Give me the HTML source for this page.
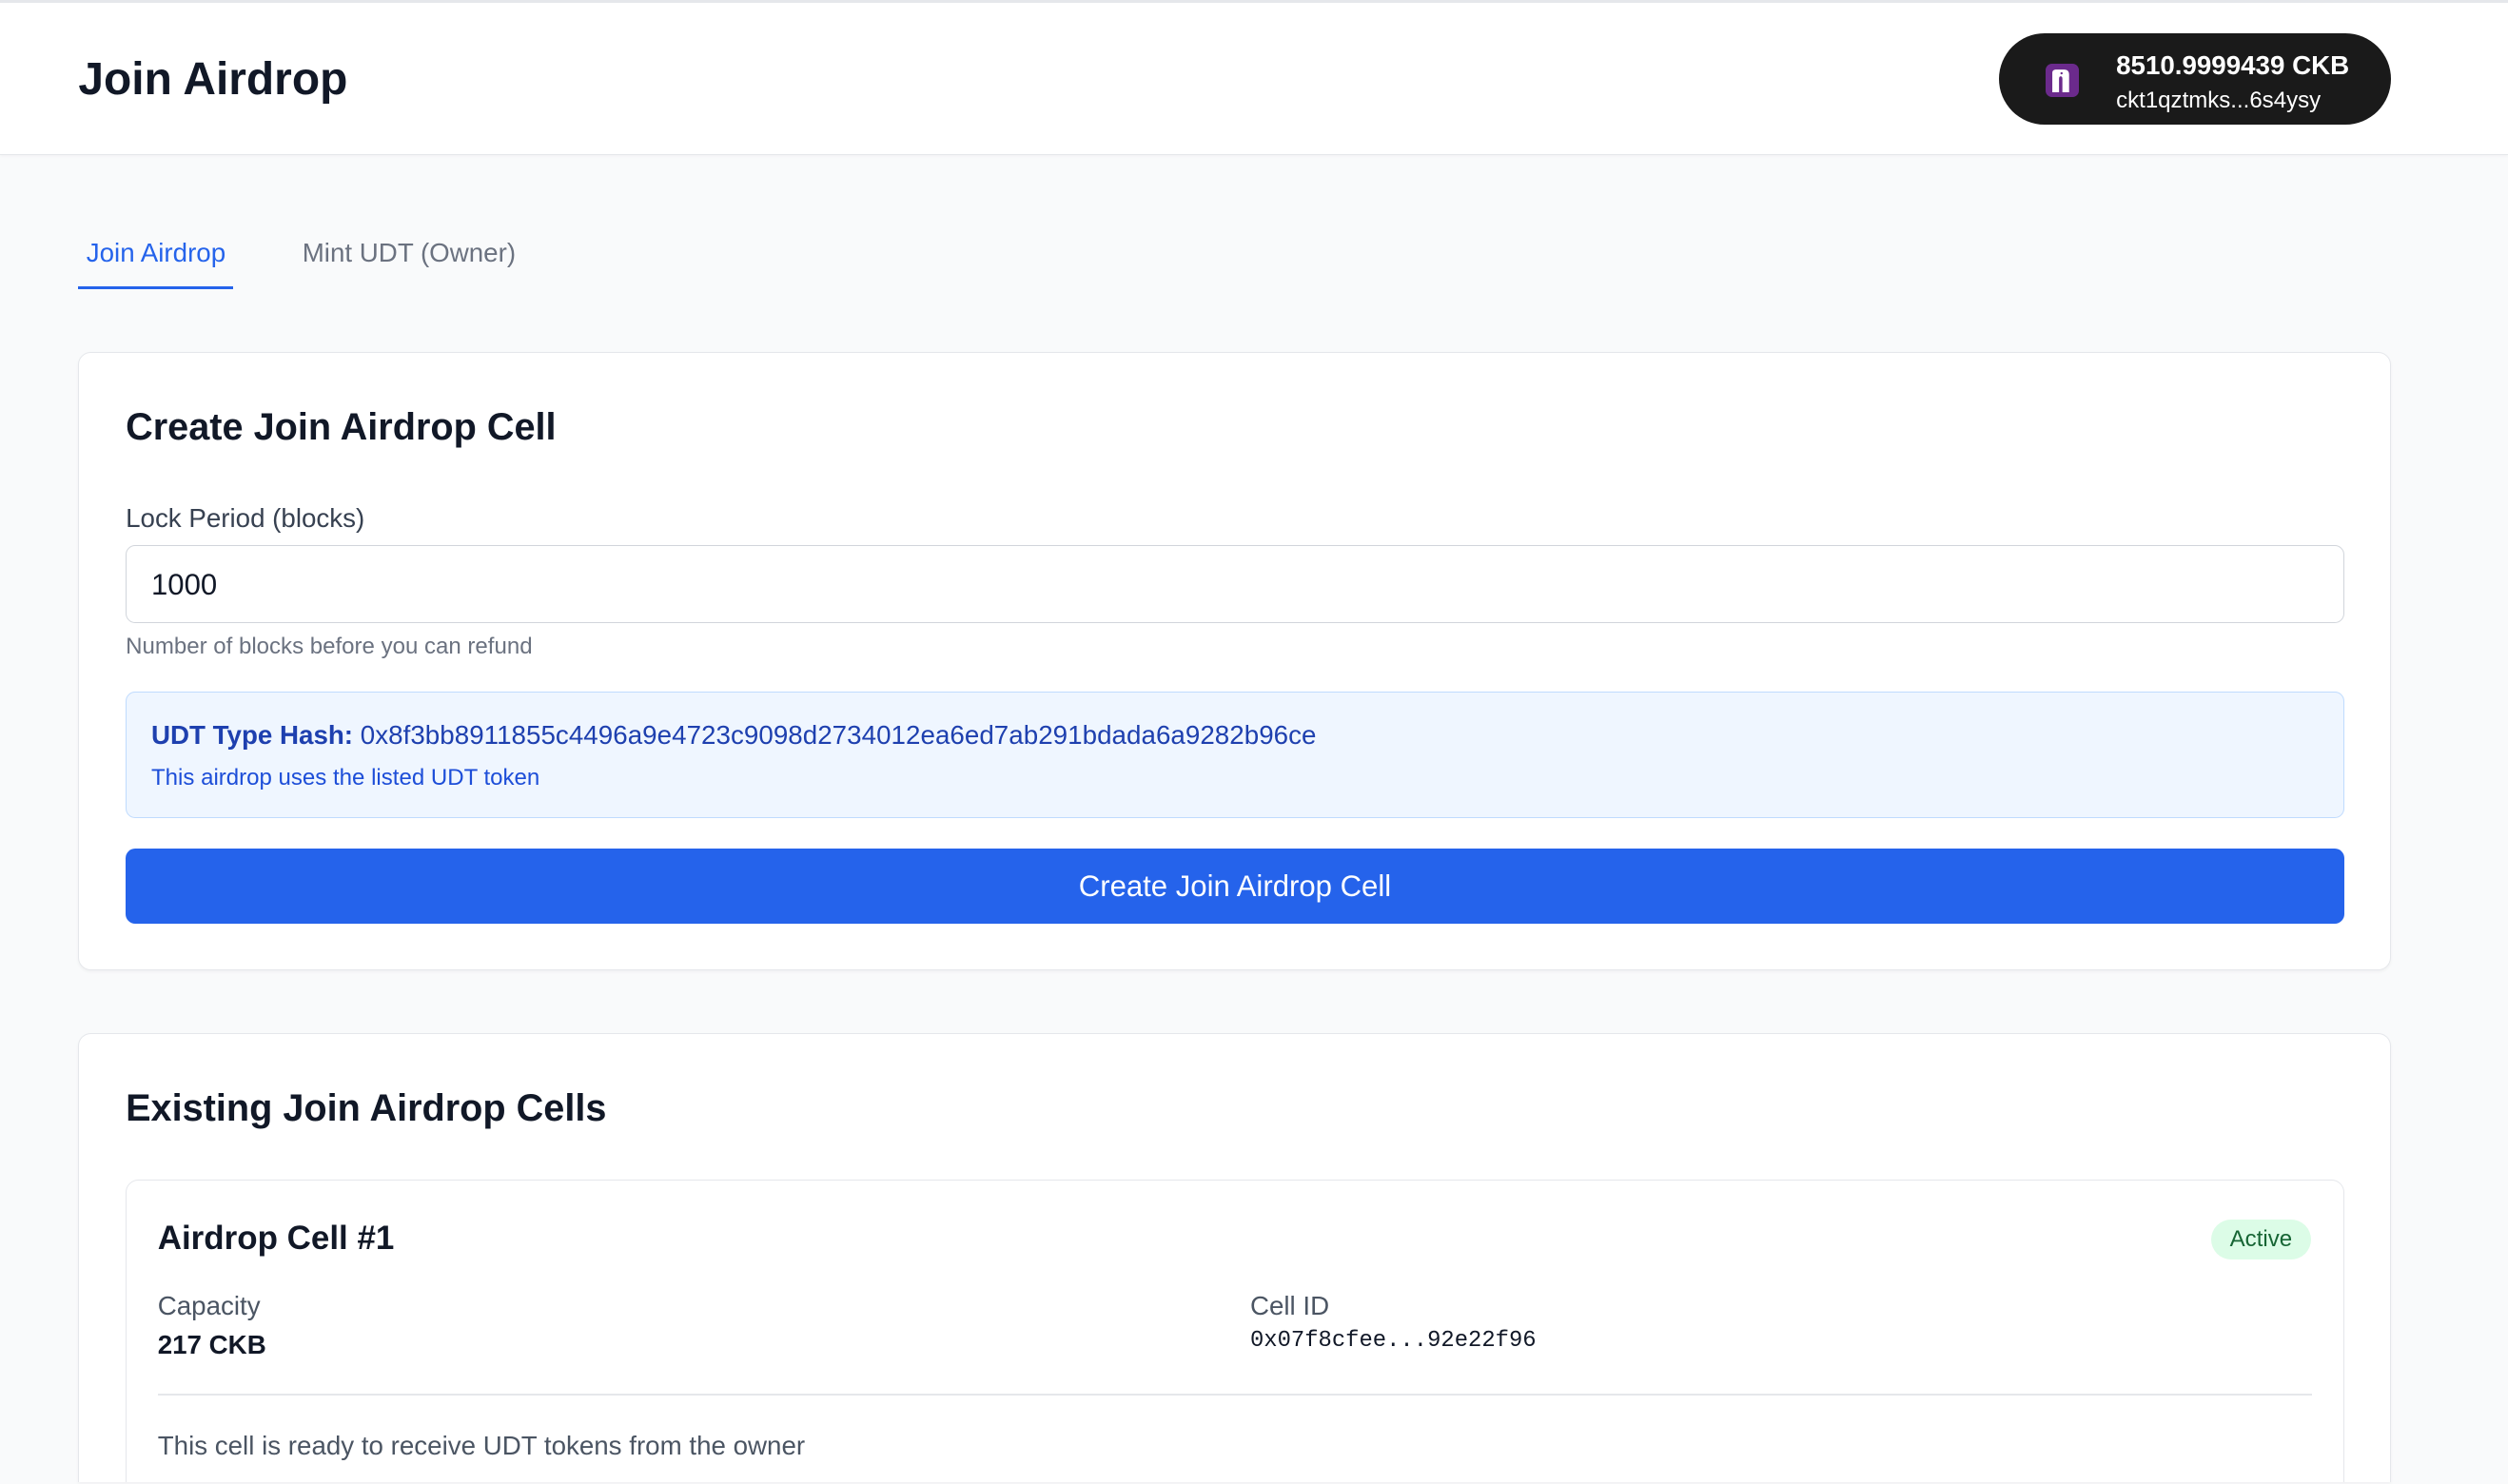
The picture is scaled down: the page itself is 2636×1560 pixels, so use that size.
<!DOCTYPE html>
<html style="overflow:hidden;height:1560px"><head><meta charset="utf-8"><style>
html,body{margin:0;padding:0;}
body{width:1568px;height:927.5px;overflow:hidden;background:#f9fafb;font-family:"Liberation Sans",Arial,sans-serif;zoom:1.68112;color:#111827;position:relative}
.abs{position:absolute}
.header{position:absolute;left:0;top:0;width:1568px;height:97px;background:#fff;border-top:2px solid #e5e7eb;border-bottom:1px solid #e5e7eb;box-sizing:border-box;box-shadow:0 1px 2px rgba(0,0,0,.04)}
.card{position:absolute;background:#fff;border:1px solid #e5e7eb;border-radius:8px;box-sizing:border-box;box-shadow:0 1px 2px rgba(0,0,0,.04)}
.t{position:absolute;white-space:nowrap;line-height:1}
</style></head><body>
<div class="header">
  <div class="t" style="left:49px;top:34px;font-size:28.5px;font-weight:700;color:#111827">Join Airdrop</div>
  <div class="abs" style="left:1250px;top:19px;width:245px;height:57px;border-radius:29px;background:#1a1a1a">
    <div class="abs" style="left:29px;top:19px;width:21px;height:21px;border-radius:4px;background:#6b2a8c">
      <svg width="21" height="21" viewBox="0 0 20 20" style="position:absolute;left:0;top:0"><path d="M4 17V5.5Q4 3.5 6 3.5H11Q14 3.5 14 6.5V17H10V9Q10 7.5 9 7.5Q8 7.5 8 9V17Z" fill="#fff"/><path d="M10 5.5L13.5 6.2L10 7Z" fill="#fff"/><circle cx="9.5" cy="5.7" r=".7" fill="#6b2a8c"/></svg>
    </div>
    <div class="t" style="left:73px;top:12px;font-size:16.5px;font-weight:700;color:#fff">8510.9999439 CKB</div>
    <div class="t" style="left:73px;top:35px;font-size:14.3px;color:#fff">ckt1qztmks...6s4ysy</div>
  </div>
</div>
<div class="t" style="left:54px;top:150px;font-size:16.5px;color:#2563eb">Join Airdrop</div>
<div class="abs" style="left:49px;top:179px;width:97px;height:2px;background:#2563eb"></div>
<div class="t" style="left:189px;top:150px;font-size:16.5px;color:#6b7280">Mint UDT (Owner)</div>

<div class="card" style="left:49px;top:220px;width:1446px;height:387px">
  <div class="t" style="left:29px;top:35px;font-size:23.6px;font-weight:700">Create Join Airdrop Cell</div>
  <div class="t" style="left:29px;top:95px;font-size:16.5px;color:#374151">Lock Period (blocks)</div>
  <div class="abs" style="left:29px;top:120px;width:1387px;height:49px;border:1px solid #d1d5db;border-radius:6px;box-sizing:border-box"></div>
  <div class="t" style="left:45px;top:136px;font-size:18.5px;color:#111827">1000</div>
  <div class="t" style="left:29px;top:177px;font-size:14.3px;color:#6b7280">Number of blocks before you can refund</div>
  <div class="abs" style="left:29px;top:212px;width:1387px;height:79px;border:1px solid #bfdbfe;background:#eff6ff;border-radius:6px;box-sizing:border-box"></div>
  <div class="t" style="left:45px;top:231px;font-size:16.5px;color:#1e40af"><b>UDT Type Hash:</b> <span style="letter-spacing:.03px">0x8f3bb8911855c4496a9e4723c9098d2734012ea6ed7ab291bdada6a9282b96ce</span></div>
  <div class="t" style="left:45px;top:259px;font-size:14.3px;color:#1d4ed8">This airdrop uses the listed UDT token</div>
  <div class="abs" style="left:29px;top:310px;width:1387px;height:47px;background:#2563eb;border-radius:6px;color:#fff;font-size:18.5px;text-align:center;line-height:47px">Create Join Airdrop Cell</div>
</div>

<div class="card" style="left:49px;top:646px;width:1446px;height:281px;overflow:hidden;border-bottom:none;border-bottom-left-radius:0;border-bottom-right-radius:0">
  <div class="t" style="left:29px;top:35px;font-size:23.6px;font-weight:700">Existing Join Airdrop Cells</div>
  <div class="abs" style="left:29px;top:91px;width:1387px;height:250px;border:1px solid #e5e7eb;border-radius:8px;box-sizing:border-box"></div>
  <div class="t" style="left:49px;top:118px;font-size:20.8px;font-weight:700">Airdrop Cell #1</div>
  <div class="abs" style="left:1333px;top:116px;width:62px;height:25px;border-radius:13px;background:#dcfce7;color:#166534;font-size:14.3px;text-align:center;line-height:25px">Active</div>
  <div class="t" style="left:49px;top:162px;font-size:16.5px;color:#4b5563">Capacity</div>
  <div class="t" style="left:49px;top:186px;font-size:16.5px;font-weight:700">217 CKB</div>
  <div class="t" style="left:732px;top:162px;font-size:16.5px;color:#4b5563">Cell ID</div>
  <div class="t" style="left:732px;top:185px;font-size:14.2px;font-family:'Liberation Mono',monospace">0x07f8cfee...92e22f96</div>
  <div class="abs" style="left:49px;top:225px;width:1347px;height:1px;background:#e5e7eb"></div>
  <div class="t" style="left:49px;top:249px;font-size:16.5px;color:#4b5563">This cell is ready to receive UDT tokens from the owner</div>
</div>
</body></html>
